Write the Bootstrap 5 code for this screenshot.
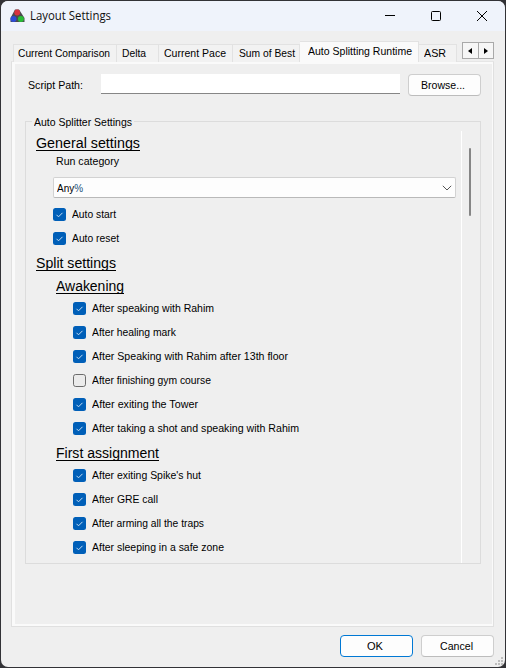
<!DOCTYPE html>
<html lang="en">
<head>
<meta charset="utf-8">
<title>Layout Settings</title>
<link href="https://cdn.jsdelivr.net/npm/bootstrap@5.3.0/dist/css/bootstrap.min.css" rel="stylesheet">
<style>
html,body{height:100%;margin:0;background:#323236;overflow:hidden}
body{font:11.6px/14px "Liberation Sans",Arial,sans-serif;color:#000}
.window{width:504px;height:666px;margin:1px 0 0 1px;background:#efefef;border-radius:7px;overflow:hidden}
.titlebar{height:30px;background:#eff3fb}
.app-icon{margin-left:9px}
.caption-text{font:12px/16px "Open Sans","Noto Sans",sans-serif;color:#111;margin-left:5px}
.fit{display:inline-block;white-space:pre;transform-origin:0 50%;text-align:left}
.sysbtn{width:46px;height:30px}
.tabs{height:21px;margin:10px 11px 0 12px}
.tab-item{height:18px;border:1px solid #e2e2e2;border-left:0;border-bottom:0;background:#f2f2f2;padding:1px 0 0 5px}
.tab-item:first-child{border-left:1px solid #e2e2e2;padding-left:4px}
.tab-item.current{height:21px;background:#fafafa;padding:2px 0 0 8px;position:relative}
.w1{width:104px}.w2{width:42px}.w3{width:74px}.w4{width:68px;padding-left:6px}.w5{width:119px}.w6{width:38px}
.spin{height:17px;width:32px;margin-left:5px;border:1px solid #a9a9a9;background:#f6f6f6;margin-bottom:3px}
.spin>span{width:15px}
.spin>span+span{border-left:1px solid #a9a9a9;width:16px}
.pane{width:483px;height:566px;margin-left:10px;border:1px solid #e0e0e0;border-top-color:#e6e6e6;background:#fafafa;padding:2px 1px 2px 3px;margin-top:-1px}
.pane-body{height:100%;background:#efefef;padding:10px 10px 0 10px}
.path-row{height:22px;padding-left:3px}
.path-input{width:299px;height:20px;background:#fff;border:0;border-bottom:1px solid #868686;border-radius:0;padding:0;margin-left:18px;margin-bottom:2px}
.win-btn{width:73px;height:22px;border:1px solid #cecece;border-bottom-color:#bcbcbc;border-radius:4px;background:#fdfdfd;font-size:11.6px;line-height:14px;padding:0 3px 0 0;color:#000}
.win-btn.default{border-color:#0078d4}
.group{width:456px;height:443px;margin:25px 0 0;border:1px solid #dcdcdc}
.group-title{height:9px;margin-left:6px}
.group-title>span{background:#efefef;padding:0 2px;height:14px;margin-top:-7px}
.settings{width:436px;height:432px;border-right:1px solid #fff;padding-left:10px}
.heading{font-size:14.67px;line-height:18px}
.heading .fit{text-decoration:underline;text-decoration-thickness:1px;text-underline-offset:2px;text-decoration-skip-ink:none}
.h-general{height:21px;padding-top:3px}
.h-split{height:24px;padding-top:4px}
.h-sub{height:22px;padding:3px 0 0 20px}
.h-first{height:23px;padding:4px 0 0 20px}
.combo-label{padding:2px 0 0 20px;height:25px}
.combo{width:403px;height:21px;margin-left:17px;margin-bottom:4px;border:1px solid #d2d2d2;border-bottom-color:#b9b9b9;border-radius:2px;background:#fdfdfd;padding:0 3px 0 3px}
.combo b{font-weight:400;color:#24527c}
.check-row{height:24px;padding-left:17px}
.check-row.deep{padding-left:37px}
.check-row svg{margin-right:6px;flex:none}
.thumb{width:2px;height:68px;background:#868686;margin:17px 0 0 7px;border-radius:1px}
.actions{height:40px;padding:8px 11px 0 0}
.grip{position:absolute;left:495px;top:657px}
</style>
<script src="https://cdn.jsdelivr.net/npm/bootstrap@5.3.0/dist/js/bootstrap.bundle.min.js"></script>
</head>
<body>
<svg width="0" height="0" class="position-absolute"><defs>
<g id="on"><rect width="13" height="13" rx="2.5" fill="#005fb8"/><path d="M3.5 6.8L5.5 8.8L9.5 4.8" fill="none" stroke="#c5ddf2" stroke-width="1"/></g>
<g id="off"><rect x=".5" y=".5" width="12" height="12" rx="2.2" fill="#ebebeb" stroke="#6b6b6b"/></g>
</defs></svg>
<div class="window">
  <div class="titlebar d-flex align-items-center">
    <svg class="app-icon" width="15" height="14" viewBox="0 0 15 14"><path d="M5 .5h4L14.5 9v4H.5V9z" fill="#4a4a4e"/><circle cx="7.2" cy="3.5" r="2.9" fill="#d8323e"/><circle cx="3.5" cy="9.9" r="3" fill="#2c4bd6"/><circle cx="10.9" cy="9.9" r="3" fill="#27bd36"/></svg>
    <span class="caption-text fit" data-w="81">Layout Settings</span>
    <div class="d-flex ms-auto">
      <div class="sysbtn d-flex"><svg class="m-auto" width="10" height="10"><path d="M0 4.5H10" stroke="#000"/></svg></div>
      <div class="sysbtn d-flex"><svg class="m-auto" width="10" height="10"><rect x=".5" y=".5" width="9" height="9" rx="1" fill="none" stroke="#000"/></svg></div>
      <div class="sysbtn d-flex"><svg class="m-auto" width="10" height="10"><path d="M0 0L10 10M10 0L0 10" stroke="#000"/></svg></div>
    </div>
  </div>
  <div class="tabs d-flex align-items-end">
    <div class="tab-item w1"><span class="fit" data-w="92">Current Comparison</span></div>
    <div class="tab-item w2"><span class="fit" data-w="24">Delta</span></div>
    <div class="tab-item w3"><span class="fit" data-w="62">Current Pace</span></div>
    <div class="tab-item w4"><span class="fit" data-w="56">Sum of Best</span></div>
    <div class="tab-item w5 current"><span class="fit" data-w="104">Auto Splitting Runtime</span></div>
    <div class="tab-item w6"><span class="fit" data-w="22">ASR</span></div>
    <div class="spin d-flex"><span class="d-flex"><svg class="m-auto" width="4" height="6"><path d="M4 0V6L0 3z"/></svg></span><span class="d-flex"><svg class="m-auto" width="4" height="6"><path d="M0 0V6L4 3z"/></svg></span></div>
  </div>
  <div class="pane"><div class="pane-body">
    <div class="path-row d-flex align-items-center">
      <span class="fit" data-w="55">Script Path:</span>
      <input class="path-input" type="text" aria-label="Script Path">
      <button class="win-btn ms-2"><span class="fit" data-w="44">Browse...</span></button>
    </div>
    <div class="group">
      <div class="group-title d-flex"><span><span class="fit" data-w="98">Auto Splitter Settings</span></span></div>
      <div class="d-flex">
        <div class="settings">
          <div class="heading h-general"><span class="fit" data-w="104">General settings</span></div>
          <div class="combo-label"><span class="fit" data-w="63">Run category</span></div>
          <div class="combo d-flex align-items-center"><span class="fit" data-w="26">Any<b>%</b></span><svg class="ms-auto" width="10" height="6"><path d="M.8.8L5 5L9.2.8" fill="none" stroke="#555"/></svg></div>
          <div class="check-row d-flex align-items-center"><svg width="13" height="13"><use href="#on"/></svg><span class="fit" data-w="44">Auto start</span></div>
          <div class="check-row d-flex align-items-center"><svg width="13" height="13"><use href="#on"/></svg><span class="fit" data-w="47">Auto reset</span></div>
          <div class="heading h-split"><span class="fit" data-w="80">Split settings</span></div>
          <div class="heading h-sub"><span class="fit" data-w="68">Awakening</span></div>
          <div class="check-row deep d-flex align-items-center"><svg width="13" height="13"><use href="#on"/></svg><span class="fit" data-w="122">After speaking with Rahim</span></div>
          <div class="check-row deep d-flex align-items-center"><svg width="13" height="13"><use href="#on"/></svg><span class="fit" data-w="84">After healing mark</span></div>
          <div class="check-row deep d-flex align-items-center"><svg width="13" height="13"><use href="#on"/></svg><span class="fit" data-w="196">After Speaking with Rahim after 13th floor</span></div>
          <div class="check-row deep d-flex align-items-center"><svg width="13" height="13"><use href="#off"/></svg><span class="fit" data-w="119">After finishing gym course</span></div>
          <div class="check-row deep d-flex align-items-center"><svg width="13" height="13"><use href="#on"/></svg><span class="fit" data-w="106">After exiting the Tower</span></div>
          <div class="check-row deep d-flex align-items-center"><svg width="13" height="13"><use href="#on"/></svg><span class="fit" data-w="207">After taking a shot and speaking with Rahim</span></div>
          <div class="heading h-first"><span class="fit" data-w="103">First assignment</span></div>
          <div class="check-row deep d-flex align-items-center"><svg width="13" height="13"><use href="#on"/></svg><span class="fit" data-w="109">After exiting Spike's hut</span></div>
          <div class="check-row deep d-flex align-items-center"><svg width="13" height="13"><use href="#on"/></svg><span class="fit" data-w="66">After GRE call</span></div>
          <div class="check-row deep d-flex align-items-center"><svg width="13" height="13"><use href="#on"/></svg><span class="fit" data-w="112">After arming all the traps</span></div>
          <div class="check-row deep d-flex align-items-center"><svg width="13" height="13"><use href="#on"/></svg><span class="fit" data-w="132">After sleeping in a safe zone</span></div>
        </div>
        <div class="thumb"></div>
      </div>
    </div>
  </div></div>
  <div class="actions d-flex justify-content-end gap-2">
    <button class="win-btn default"><span class="fit" data-w="16">OK</span></button>
    <button class="win-btn"><span class="fit" data-w="33">Cancel</span></button>
  </div>
</div>
<svg class="grip" width="10" height="10" fill="#bdbdbd"><path d="M6 0h2v2H6zM3 3h2v2H3zM6 3h2v2H6zM0 6h2v2H0zM3 6h2v2H3zM6 6h2v2H6z"/></svg>
<script>
// Condense each label horizontally to its designed width.
document.querySelectorAll('.fit').forEach(function (el) {
  var r = document.createRange();
  r.selectNodeContents(el);
  var natural = r.getBoundingClientRect().width;
  el.style.width = el.dataset.w + 'px';
  el.style.transform = 'scaleX(' + (el.dataset.w / natural).toFixed(4) + ')';
});
</script>
</body>
</html>
